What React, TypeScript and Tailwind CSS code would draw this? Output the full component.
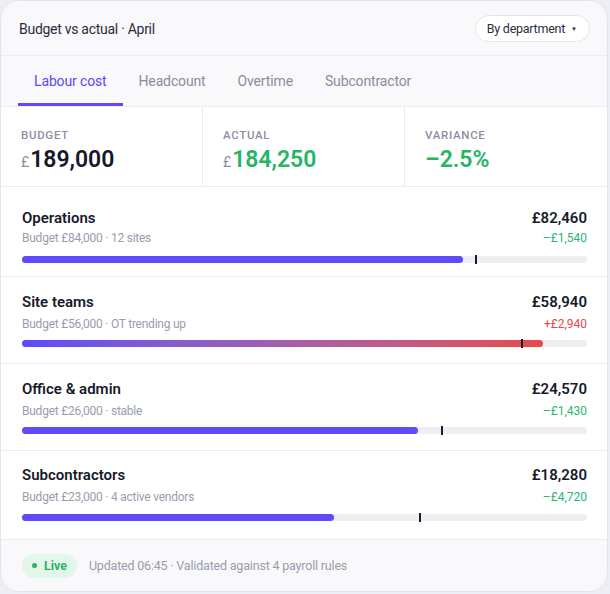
import React from 'react';

type Dept = {
  name: string;
  sub: string;
  actual: string;
  delta: string;
  over: boolean;
  fill: number;
  marker: number;
};

const depts: Dept[] = [
  { name: 'Operations', sub: 'Budget £84,000 · 12 sites', actual: '£82,460', delta: '–£1,540', over: false, fill: 78, marker: 80.2 },
  { name: 'Site teams', sub: 'Budget £56,000 · OT trending up', actual: '£58,940', delta: '+£2,940', over: true, fill: 92.2, marker: 88.4 },
  { name: 'Office & admin', sub: 'Budget £26,000 · stable', actual: '£24,570', delta: '–£1,430', over: false, fill: 70, marker: 74.2 },
  { name: 'Subcontractors', sub: 'Budget £23,000 · 4 active vendors', actual: '£18,280', delta: '–£4,720', over: false, fill: 55.2, marker: 70.2 },
];

const tabs = ['Labour cost', 'Headcount', 'Overtime', 'Subcontractor'];

// per-row spacing: [row padding, gap under title, gap above bar]
const rowPad: [string, string, string][] = [
  ['pt-[21px] pb-[13px]', 'mt-[2px]', 'mt-[10px]'],
  ['pt-[15px] pb-[16px]', 'mt-[4px]', 'mt-[8px]'],
  ['pt-[15px] pb-[16px]', 'mt-[4px]', 'mt-[8px]'],
  ['pt-[14px] pb-[18px]', 'mt-[4px]', 'mt-[9px]'],
];

const DeptRow = ({ d, i }: { d: Dept; i: number }) => {
  const [pad, subGap, barGap] = rowPad[i];
  return (
    <div className={`shrink-0 pl-[21px] pr-[20px] border-b border-[#ececf2] ${pad}`}>
      <div className="flex items-center justify-between">
        <span className="text-[15px] leading-[20px] font-semibold text-[#171a2b]">{d.name}</span>
        <span className="text-[15px] leading-[20px] font-semibold text-[#171a2b]">{d.actual}</span>
      </div>
      <div className={`flex items-center justify-between ${subGap}`}>
        <span className="text-[12px] leading-[16px] tracking-[-0.02em] text-[#9a9cad]">{d.sub}</span>
        <span className={`text-[12px] leading-[16px] ${d.over ? 'text-[#e5484d]' : 'text-[#2bb673]'}`}>{d.delta}</span>
      </div>
      <div className={`relative h-[7px] rounded-full bg-[#eeeef3] ${barGap}`}>
        <div
          className={`h-full rounded-full ${d.over ? 'bg-gradient-to-r from-[#5d4bfb] to-[#e8484b]' : 'bg-[#5f4bfb]'}`}
          style={{ width: `${d.fill}%` }}
        />
        <div className="absolute top-[-1px] h-[9px] w-[2px] bg-[#1a1b2b]" style={{ left: `${d.marker}%` }} />
      </div>
    </div>
  );
};

export default function App() {
  return (
    <div className="w-[610px] h-[594px] bg-[#eeeef7]" style={{ fontFamily: 'Roboto, "Noto Sans", sans-serif' }}>
      <div className="w-[608px] h-[592px] rounded-[20px] border border-[#e4e4ee] bg-white overflow-hidden flex flex-col">
        {/* header */}
        <div className="shrink-0 h-[55px] pt-[1px] flex items-center justify-between pl-[18px] pr-[17px] bg-[#f9f9fb] border-b border-[#ececf2]">
          <span className="text-[14px] leading-[20px] tracking-[-0.02em] text-[#2a2c3c]">Budget vs actual · April</span>
          <div className="h-[27px] pl-[11px] pr-[12px] flex items-center gap-[6px] rounded-full border border-[#e4e4ec] bg-white">
            <span className="text-[12.5px] leading-[16px] tracking-[-0.02em] text-[#2a2c3c]">By department</span>
            <span className="text-[6px] leading-[8px] text-[#2a2c3c]">▼</span>
          </div>
        </div>

        {/* tabs */}
        <div className="shrink-0 h-[51px] flex px-[17px] bg-[#f9f9fb] border-b border-[#ececf2]">
          {tabs.map((t, i) => (
            <div
              key={t}
              className={`px-4 pt-[3px] flex items-center text-[14px] leading-[20px] tracking-[-0.01em] border-b-[3px] ${
                i === 0 ? 'border-[#6149fb] text-[#5c48f5]' : 'border-transparent text-[#8a8c9e]'
              }`}
            >
              {t}
            </div>
          ))}
        </div>

        {/* summary */}
        <div className="shrink-0 grid grid-cols-3 h-[80px] border-b border-[#ececf2]">
          <div className="pl-5 pt-[20px] border-r border-[#ececf2]">
            <div className="text-[11.5px] leading-[16px] font-medium tracking-[0.06em] text-[#8d8fa2]">BUDGET</div>
            <div className="flex items-baseline gap-[1px] mt-[3px] leading-[28px]">
              <span className="text-[14px] text-[#8d8fa2]">£</span>
              <span className="text-[23px] font-semibold text-[#151829]">189,000</span>
            </div>
          </div>
          <div className="pl-5 pt-[20px] border-r border-[#ececf2]">
            <div className="text-[11.5px] leading-[16px] font-medium tracking-[0.06em] text-[#8d8fa2]">ACTUAL</div>
            <div className="flex items-baseline gap-[1px] mt-[3px] leading-[28px]">
              <span className="text-[14px] text-[#8d8fa2]">£</span>
              <span className="text-[23px] font-semibold text-[#27b565]">184,250</span>
            </div>
          </div>
          <div className="pl-5 pt-[20px]">
            <div className="text-[11.5px] leading-[16px] font-medium tracking-[0.06em] text-[#8d8fa2]">VARIANCE</div>
            <div className="mt-[3px] text-[23px] leading-[28px] font-semibold text-[#27b565]">–2.5%</div>
          </div>
        </div>

        {/* departments */}
        {depts.map((d, i) => (
          <DeptRow key={d.name} d={d} i={i} />
        ))}

        {/* footer */}
        <div className="flex-1 flex items-center gap-3 pl-[21px] bg-[#f9f9fb]">
          <div className="h-[24px] pl-[10px] pr-[10px] flex items-center gap-[7px] rounded-full bg-[#e3f6ea]">
            <span className="w-[5px] h-[5px] rounded-full bg-[#26b562]" />
            <span className="text-[12.5px] leading-[16px] font-semibold text-[#26ad5e]">Live</span>
          </div>
          <span className="text-[12.5px] leading-[16px] tracking-[-0.015em] text-[#9a9cad]">Updated 06:45 · Validated against 4 payroll rules</span>
        </div>
      </div>
    </div>
  );
}
